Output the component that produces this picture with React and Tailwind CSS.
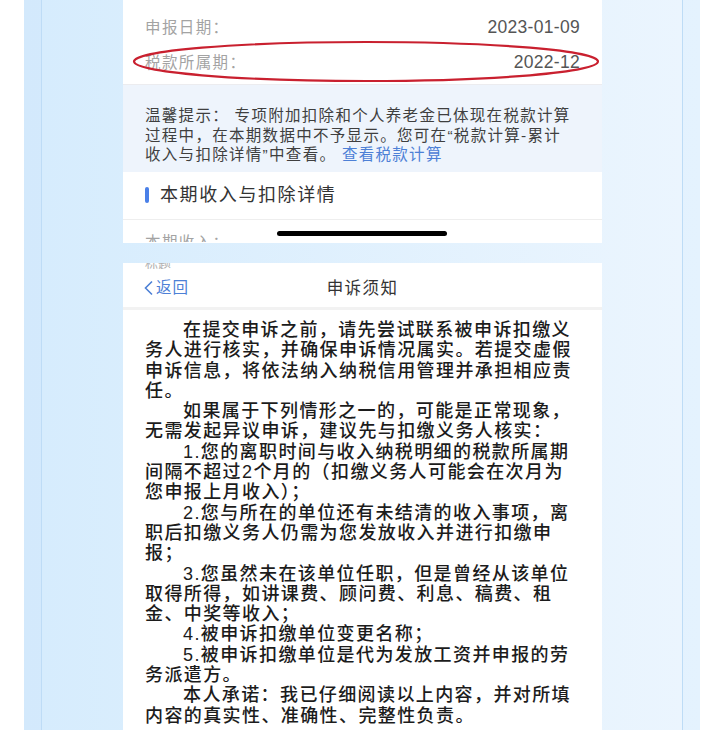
import React from "react";

const FONT = { fontFamily: "'Liberation Sans','Noto Sans CJK SC',sans-serif" };

// lines of the notice, [indent, text]
const noticeLines = [
  [true, "在提交申诉之前，请先尝试联系被申诉扣缴义"],
  [false, "务人进行核实，并确保申诉情况属实。若提交虚假"],
  [false, "申诉信息，将依法纳入纳税信用管理并承担相应责"],
  [false, "任。"],
  [true, "如果属于下列情形之一的，可能是正常现象，"],
  [false, "无需发起异议申诉，建议先与扣缴义务人核实："],
  [true, "1.您的离职时间与收入纳税明细的税款所属期"],
  [false, "间隔不超过2个月的（扣缴义务人可能会在次月为"],
  [false, "您申报上月收入）；"],
  [true, "2.您与所在的单位还有未结清的收入事项，离"],
  [false, "职后扣缴义务人仍需为您发放收入并进行扣缴申"],
  [false, "报；"],
  [true, "3.您虽然未在该单位任职，但是曾经从该单位"],
  [false, "取得所得，如讲课费、顾问费、利息、稿费、租"],
  [false, "金、中奖等收入；"],
  [true, "4.被申诉扣缴单位变更名称；"],
  [true, "5.被申诉扣缴单位是代为发放工资并申报的劳"],
  [false, "务派遣方。"],
  [true, "本人承诺：我已仔细阅读以上内容，并对所填"],
  [false, "内容的真实性、准确性、完整性负责。"],
];

function InfoRow({ label, value }) {
  return (
    <div className="flex h-[35px] items-center justify-between">
      <span className="text-[15.5px] tracking-[1.4px] text-[#a3a3a3]">{label}</span>
      <span className="text-[17.5px] tracking-[0.3px] text-[#555]">{value}</span>
    </div>
  );
}

export default function App() {
  return (
    <div className="h-[730px] w-[722px] overflow-hidden bg-white pl-[24px] pr-[22px]" style={FONT}>
      <div className="h-full bg-gradient-to-r from-[#d3e9fc] to-[#e4f2fe] px-[17px]">
        <div className="flex h-full flex-col border-x border-[#bedcf6] bg-gradient-to-r from-[#d6ecfd] to-[#ebf5fe] pl-[81px] pr-[80px]">
          {/* first screenshot: declaration detail */}
          <div className="relative h-[243px] shrink-0 overflow-hidden bg-white">
            <div className="px-[22px] pb-[4px] pt-[10px]">
              <InfoRow label="申报日期：" value="2023-01-09" />
              <InfoRow label="税款所属期：" value="2022-12" />
            </div>

            <div className="border-t border-[#ececef] bg-[#eef4fc] px-[22px] pb-[7px] pt-[21px] text-[15.5px] leading-[19.6px] tracking-[1.3px] text-[#3f3f3f]">
              <p className="whitespace-nowrap">温馨提示： 专项附加扣除和个人养老金已体现在税款计算</p>
              <p className="whitespace-nowrap">过程中，在本期数据中不予显示。您可在“税款计算-累计</p>
              <p className="whitespace-nowrap">
                收入与扣除详情”中查看。 <span className="text-[#4d80d6]">查看税款计算</span>
              </p>
            </div>

            <div className="flex h-[47px] items-center px-[22px]">
              <span className="h-[16px] w-[4px] rounded-full bg-[#4a80e8]" />
              <span className="ml-[11px] text-[18px] tracking-[1.6px] text-[#333]">本期收入与扣除详情</span>
            </div>
            <div className="h-[23px] overflow-hidden border-t border-[#eeeeee] px-[22px] pt-[19px]">
              <div className="text-[15.5px] leading-[8px] tracking-[1.4px] text-[#a3a3a3]">本期收入：</div>
            </div>

            {/* red annotation */}
            <svg className="absolute left-0 top-0" width="479" height="90" viewBox="0 0 479 90">
              <ellipse cx="243" cy="61.5" rx="232" ry="19.5" fill="none" stroke="#c9202f" strokeWidth="2.2" />
            </svg>
            {/* home indicator */}
            <div className="absolute left-[154px] top-[231px] h-[5px] w-[170px] rounded-full bg-black" />
          </div>

          <div className="h-[20px] shrink-0" />

          {/* second screenshot: appeal notice */}
          <div className="flex-1 overflow-hidden bg-white">
            <div className="h-[6px] overflow-hidden px-[22px]">
              <div className="text-[13px] leading-[2px] text-[#b0b0b0]">标题</div>
            </div>
            <div className="relative flex h-[38px] items-center justify-center">
              <div className="absolute left-[20px] top-0 flex h-full items-center text-[15.5px] tracking-[1px] text-[#4d80d6]">
                <svg width="11" height="16" viewBox="0 0 11 16" className="mr-[2px]">
                  <polyline points="9,1.5 2.5,8 9,14.5" fill="none" stroke="#4d80d6" strokeWidth="1.6" />
                </svg>
                返回
              </div>
              <span className="text-[16.5px] tracking-[1.4px] text-[#333]">申诉须知</span>
            </div>
            <div className="h-[3px] bg-[#f2f2f2]" />
            <div className="px-[22px] pt-[10px] text-[18px] font-medium leading-[20.3px] tracking-[1.4px] text-[#1c1c1c]">
              {noticeLines.map(([indent, text], i) => (
                <p key={i} className={indent ? "whitespace-nowrap pl-[38px]" : "whitespace-nowrap"}>
                  {text}
                </p>
              ))}
            </div>
          </div>
        </div>
      </div>
    </div>
  );
}
